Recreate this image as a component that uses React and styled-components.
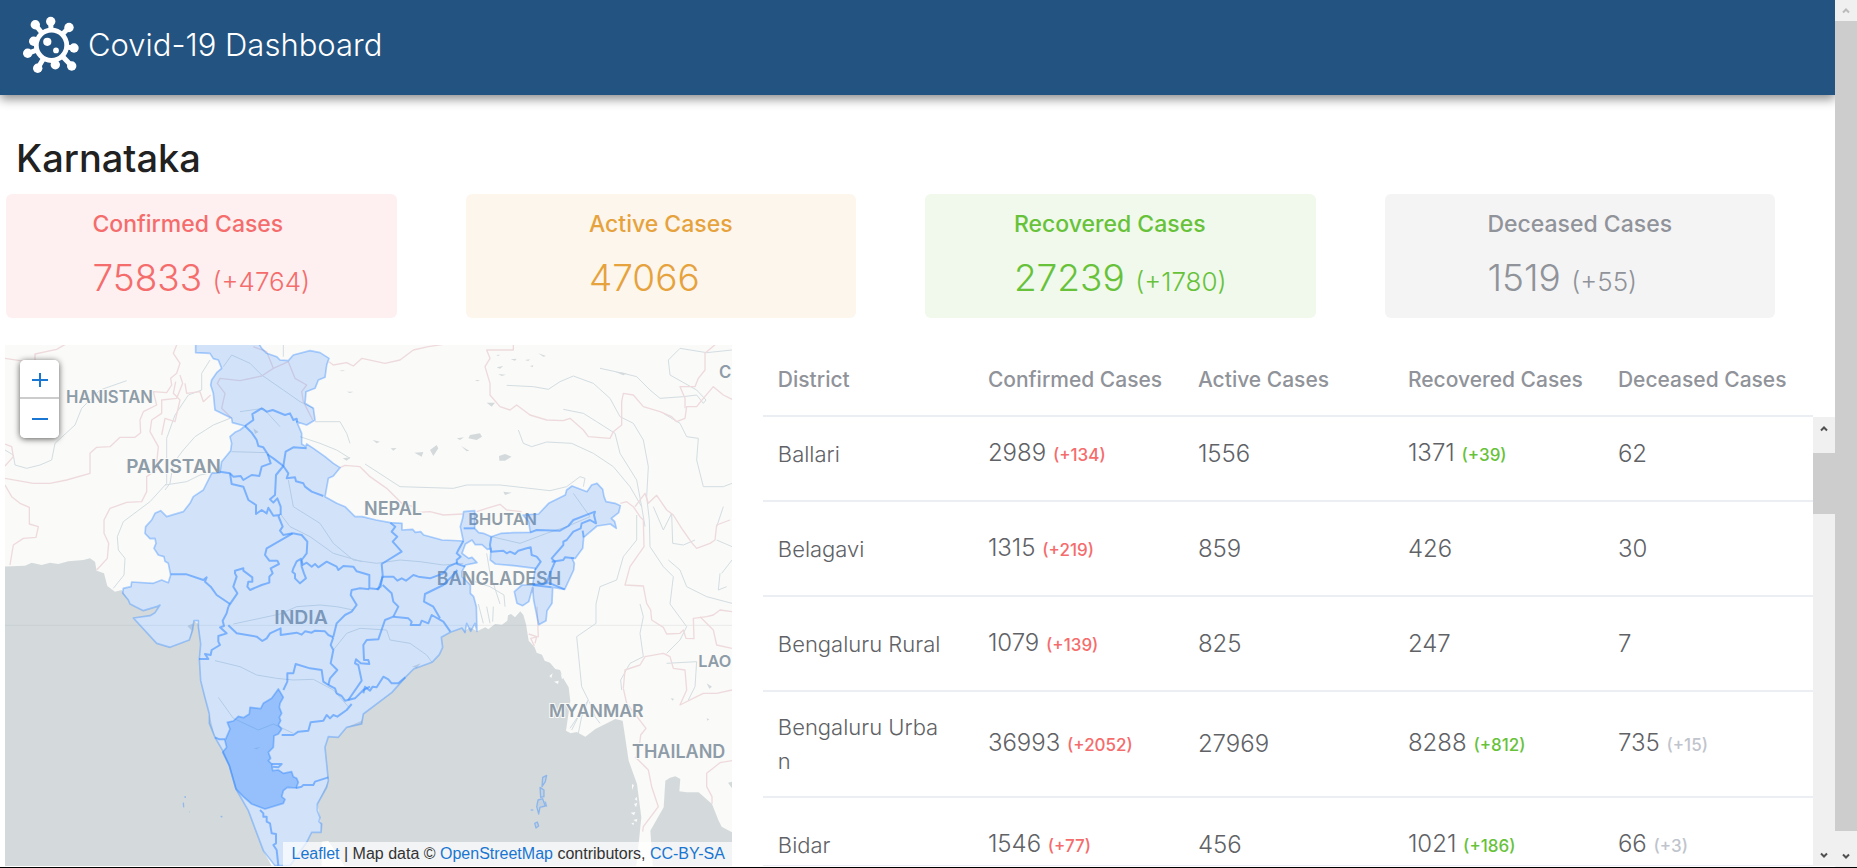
import React, { useLayoutEffect, useRef } from "react";
import styled, { createGlobalStyle } from "styled-components";

const tones = {
  red: { text: "#f56c6c", fill: "#fef0f0" },
  orange: { text: "#e6a23c", fill: "#fdf6ec" },
  green: { text: "#67c23a", fill: "#f0f9eb" },
  gray: { text: "#909399", fill: "#f4f4f5" },
  silver: { text: "#c0c4cc", fill: "#ffffff" },
};

const GlobalStyle = createGlobalStyle`
  * { box-sizing: border-box; }
  body {
    margin: 0;
    background: #fff;
    font-family: Inter, "Liberation Sans", sans-serif;
    overflow: hidden;
  }
`;

const Page = styled.div`
  display: flex;
  height: 100vh;
  border-bottom: 1px solid #000;
`;

const Content = styled.div`
  flex: 1;
  min-width: 0;
  display: flex;
  flex-direction: column;
  overflow: hidden;
`;

const Header = styled.header`
  display: flex;
  align-items: center;
  gap: 6px;
  height: 95px;
  flex: none;
  padding: 0 22px 6px;
  background: #235380;
  color: #fff;
  box-shadow: 0 4px 10px rgba(0, 0, 0, 0.45);
`;

const Brand = styled.span`
  font-size: 31px;
  line-height: 36px;
  font-weight: 300;
`;

const Title = styled.h1`
  margin: 0;
  padding: 40px 16px 13px;
  font-size: 38px;
  line-height: 46px;
  font-weight: 500;
  color: #212121;
`;

const Cards = styled.section`
  display: grid;
  grid-template-columns: repeat(4, 1fr);
  gap: 69px;
  padding: 0 60px 27px 6px;
`;

const Card = styled.article`
  display: flex;
  justify-content: center;
  height: 124px;
  padding-top: 16px;
  border-radius: 6px;
  background: ${(p) => tones[p.$tone].fill};
  color: ${(p) => tones[p.$tone].text};
`;

const CardLabel = styled.h2`
  margin: 0 0 18px;
  font-size: 23px;
  line-height: 28px;
  font-weight: 500;
`;

const CardValue = styled.div`
  font-size: 37px;
  line-height: 44px;
  font-weight: 300;
`;

const CardChange = styled.span`
  font-size: 26px;
`;

const Main = styled.main`
  flex: 1;
  min-height: 0;
  display: grid;
  grid-template-columns: minmax(0, 40fr) minmax(0, 59fr);
  grid-template-rows: minmax(0, 1fr);
  gap: 31px;
  padding: 0 0 1px 5px;
`;

const MapPane = styled.section`
  position: relative;
  overflow: hidden;
  background: #fafaf8;
`;

const MapDrawing = styled.svg`
  display: block;
  width: 100%;
  height: 100%;
`;

const Country = styled.text`
  font-size: ${(p) => p.$size}px;
  font-weight: 600;
  fill: #8e9ca8;
  text-anchor: ${(p) => p.$anchor || "middle"};
  paint-order: stroke;
  stroke: ${(p) => (p.$over ? "none" : "#fafaf8")};
  stroke-width: 6px;
`;

const ZoomControl = styled.div`
  position: absolute;
  top: 15px;
  left: 15px;
  display: flex;
  flex-direction: column;
  width: 39px;
  border-radius: 5px;
  overflow: hidden;
  box-shadow: 0 1px 6px rgba(0, 0, 0, 0.65);
`;

const ZoomButton = styled.button`
  display: flex;
  align-items: center;
  justify-content: center;
  height: 39px;
  padding: 0;
  border: 0;
  background: #fff;
  color: #1976d2;
  &:first-child {
    border-bottom: 2px solid #ccc;
  }
`;

const Attribution = styled.div`
  position: absolute;
  right: 0;
  bottom: 0;
  padding: 0 7px 0 8px;
  background: rgba(255, 255, 255, 0.7);
  font: 16px/24px "Liberation Sans", Arial, sans-serif;
  color: #333;
  white-space: nowrap;
`;

const MapLink = styled.a`
  color: #1976d2;
  text-decoration: none;
`;

const TablePane = styled.section`
  display: grid;
  grid-template-columns: minmax(0, 1fr) 22px;
  grid-template-rows: minmax(0, 1fr);
`;

const TableScroll = styled.div`
  overflow-y: auto;
  scrollbar-width: none;
  border-bottom: 1px solid #ebeef5;
`;

const Table = styled.table`
  width: 100%;
  table-layout: fixed;
  border-collapse: separate;
  border-spacing: 0;
`;

const HeadCell = styled.th`
  position: sticky;
  top: 0;
  height: 72px;
  padding: 0 0 0 15px;
  border-bottom: 2px solid #ebeef2;
  background: #fff;
  color: #909399;
  font-size: 21px;
  line-height: 34px;
  font-weight: 500;
  text-align: left;
  white-space: nowrap;
`;

const Cell = styled.td`
  height: 95px;
  padding: 18px 15px;
  border-bottom: 2px solid #ebeef2;
  color: #606266;
  font-size: 24px;
  line-height: 34px;
  font-weight: 300;
  white-space: nowrap;
`;

const District = styled.div`
  font-size: 22px;
  white-space: pre-line;
`;

const Change = styled.span`
  font-size: 17px;
  font-weight: 500;
  color: ${(p) => tones[p.$tone].text};
`;

const Rail = styled.div`
  display: flex;
  flex-direction: column;
  width: 22px;
  flex: none;
  background: #f0f0f0;
  margin-top: ${(p) => p.$top}px;
`;

const RailEnd = styled.div`
  display: flex;
  align-items: center;
  justify-content: center;
  flex: none;
  height: ${(p) => p.$height}px;
  color: ${(p) => (p.$dim ? "#bbb" : "#505050")};
`;

const Thumb = styled.div`
  flex: ${(p) => (p.$height ? "none" : 1)};
  height: ${(p) => p.$height}px;
  margin-top: ${(p) => p.$offset || 0}px;
  margin-bottom: ${(p) => (p.$height ? "auto" : p.$gap + "px")};
  background: #cdcdcd;
`;

const Chevron = ({ down }) => (
  <svg width="8" height="7" viewBox="0 0 8 7" fill="none" stroke="currentColor" strokeWidth="2">
    <path d={down ? "M1 1.5 4 4.5 7 1.5" : "M1 5.5 4 2.5 7 5.5"} />
  </svg>
);

const knobs = [
  [50.7, 22.5], [35.3, 25.7], [69, 28.5], [33.7, 42.3], [74, 49],
  [27.7, 54.3], [37.7, 69.3], [55.3, 65.7], [71.7, 67],
];

const VirusLogo = () => (
  <svg width="60" height="58" viewBox="22 17 60 58" fill="#fff" stroke="#fff" aria-hidden="true">
    {knobs.map(([x, y]) => {
      const d = Math.hypot(x - 51.5, y - 46);
      const k = 15 / d;
      return (
        <g key={x}>
          <path d={`M${51.5 + (x - 51.5) * k} ${46 + (y - 46) * k}L${x} ${y}`} strokeWidth="5" />
          <circle cx={x} cy={y} r="4.7" stroke="none" />
        </g>
      );
    })}
    <circle cx="51.5" cy="46.3" r="15.2" fill="#235380" strokeWidth="4.8" />
    <circle cx="47.3" cy="42.8" r="4.1" stroke="none" />
    <circle cx="56" cy="51.4" r="2.9" stroke="none" />
  </svg>
);

const seaPath =
  "M0 680L75 677 95 668 125 675 150 668 175 672 205 664 250 660 270 655 285 665 290 692 312 700 322 738 345 755 365 750 385 780 390 792 430 812 470 800 480 795 465 818 450 827 400 834 470 910 510 922 568 900 582 842 595 852 602 912 598 957 602 1022 628 1122 645 1192 668 1232 688 1277 708 1347 745 1412 790 1532 815 1577 870 1577 920 1507 935 1477 963 1477 960 1432 952 1392 985 1322 975 1222 985 1190 1015 1192 1040 1162 1085 1142 1090 1122 1176 1057 1216 1012 1241 987 1296 967 1318 944 1328 922 1324 892 1351 877 1386 864 1393 874 1410 862 1431 874 1456 862 1465 868 1485 852 1506 854 1522 842 1524 826 1533 822 1545 832 1561 814 1570 825 1578 852 1586 902 1604 922 1610 938 1626 944 1634 962 1650 968 1666 987 1680 990 1691 1017 1706 1042 1711 1082 1698 1172 1712 1180 1730 1176 1756 1190 1786 1167 1846 1137 1868 1142 1871 1162 1886 1262 1911 1332 1924 1432 1918 1492 1906 1600 0 1600Z";
const gulfPath =
  "M1996 1322L2010 1313 2026 1309 2041 1317 2038 1354 2060 1357 2096 1357 2136 1392 2156 1442 2165 1460 2196 1477 2210 1600 1960 1600 1951 1472 1991 1402Z";
const indiaPath =
  "M587 0L587 38 630 40 640 56 655 60 665 85 650 98 635 120 632 135 640 160 645 210 695 235 697 248 735 258 720 270 705 277 690 290 695 310 692 332 665 365 660 398 635 400 610 450 580 470 570 490 550 515 500 530 482 512 465 520 455 540 437 560 435 580 450 596 465 595 468 610 462 625 475 645 492 650 495 664 505 670 512 705 505 728 485 720 460 730 395 726 393 740 370 745 368 760 385 780 390 792 430 812 470 800 480 795 465 818 450 827 400 834 470 910 510 922 568 900 578 870 582 842 595 842 595 860 602 912 598 957 602 1022 614 1070 628 1122 628 1150 645 1192 668 1232 688 1277 708 1347 745 1412 790 1532 825 1577 870 1577 920 1507 935 1477 963 1477 965 1452 957 1445 960 1432 952 1412 952 1392 980 1342 985 1322 975 1222 985 1190 1015 1192 1040 1162 1085 1152 1090 1122 1176 1057 1216 1012 1241 987 1296 967 1318 944 1328 922 1324 892 1351 877 1386 864 1395 878 1400 850 1412 874 1425 850 1431 874 1429 800 1421 770 1411 760 1411 735 1386 710 1386 695 1396 675 1431 668 1416 652 1406 655 1386 640 1396 612 1416 600 1426 614 1446 614 1462 628 1473 625 1471 660 1486 672 1541 677 1606 685 1598 735 1566 735 1543 755 1551 790 1568 797 1586 785 1598 742 1601 780 1616 854 1638 842 1641 812 1656 790 1658 742 1694 748 1721 690 1723 670 1716 655 1726 655 1748 625 1751 592 1791 558 1831 552 1849 565 1844 545 1834 535 1856 518 1861 497 1845 490 1818 485 1812 470 1808 448 1791 430 1775 435 1761 455 1716 438 1700 450 1696 465 1646 490 1616 522 1569 525 1586 545 1591 577 1540 578 1504 580 1474 590 1450 580 1436 578 1424 565 1424 512 1391 515 1388 535 1381 560 1390 603 1326 600 1271 585 1262 575 1246 577 1238 568 1206 570 1206 550 1171 548 1128 540 1086 530 1065 530 1035 500 1010 490 975 470 985 415 1000 408 1020 383 1000 370 975 350 940 325 920 312 917 320 905 312 905 280 890 245 920 255 945 240 940 205 915 190 918 155 945 145 955 120 975 112 980 75 987 55 960 38 930 32 880 45 865 62 840 60 830 50 800 40 785 25 770 0Z";
const karnatakaPath =
  "M835 1047L843 1060 850 1072 840 1090 838 1102 845 1120 838 1132 842 1142 835 1155 845 1167 835 1182 822 1187 820 1222 805 1237 812 1255 805 1262 815 1272 818 1292 835 1290 850 1300 875 1295 880 1310 890 1315 895 1327 888 1344 862 1342 850 1352 845 1370 855 1378 850 1390 795 1407 755 1392 730 1370 708 1347 688 1277 668 1237 680 1222 675 1202 690 1167 682 1147 700 1143 715 1129 730 1133 748 1122 750 1102 782 1106 790 1090 815 1075Z";

const stateBorders = [
  "M735 258L760 240 757 222 785 205 800 215 818 210 855 225 870 220 880 240 890 236 892 248",
  "M735 258L755 278 770 300 775 318 790 322 805 345 820 355 850 378",
  "M850 378L857 335 880 322 920 325",
  "M850 378L865 400 860 415 885 412 888 424 910 430 915 440 935 455 970 468",
  "M803 342L812 370 785 380 778 408 755 405 730 420 722 408 700 410 690 400 660 395",
  "M690 400L695 432 730 440 745 480 768 495 768 522 785 510 800 520 805 503 820 527 840 525",
  "M850 378L828 405 825 465 810 478 820 488 832 475 842 500 842 525",
  "M835 528L848 560 840 572 850 585 878 580",
  "M878 580L905 585 922 605 920 640 905 660 908 675 920 668 935 680 945 672 955 682 980 665 1010 680 1015 690 1030 678 1060 680 1070 694 1108 705 1108 745 1135 748 1148 710",
  "M905 655L890 664 880 685 877 695 885 702 885 715 900 730 918 715 912 700 905 680 903 660",
  "M878 580L800 625 795 645 808 662 832 662 837 672 812 685 818 700 808 710 808 728 785 735 750 750 742 740 745 725 757 725 757 712 730 692 730 685 705 692 705 700 710 710 700 740 712 760 695 785 685 800",
  "M512 703L560 703 610 720 620 712 615 725 632 740 650 765 690 792",
  "M685 800L680 820 668 842 672 858 660 862 680 880 655 888 655 905 660 915 635 930 632 945 615 942 625 957 597 957",
  "M685 856L710 880 770 890 787 903 800 895 810 880 842 865 842 885 890 878 905 884 915 874 935 878 945 872 975 874 985 885 1000 892",
  "M1000 892L992 915 1000 930 992 970 1012 990 990 1015 985 1035",
  "M1000 890L1010 850 1035 825 1055 815 1070 795 1052 765 1055 750 1080 745 1108 748",
  "M850 1050L862 1025 862 1000 880 1000 887 972 930 985 965 990 970 1025 985 1035",
  "M985 1035L1005 1045 1010 1060 1025 1068 1035 1082 1065 1075 1090 1050 1110 1040",
  "M1045 1080L1085 1022 1075 975 1065 970 1068 958 1082 970 1108 972 1105 960 1092 960 1090 915 1100 900 1135 898 1155 840 1180 830",
  "M1090 1060L1095 1040 1110 1052 1118 1040 1130 1042 1150 1010 1165 1018 1175 1030 1195 1030 1216 1012",
  "M845 1185L880 1185 895 1175 925 1172 932 1147 970 1142 980 1125 990 1135 1000 1125 1012 1130 1040 1110 1055 1092",
  "M888 1344L905 1340 910 1335 940 1335 945 1325 985 1312",
  "M780 1410L790 1420 790 1430 800 1430 800 1445 810 1450 815 1480 828 1482 828 1510 820 1515 830 1530 835 1577",
  "M645 1192L658 1198 675 1198",
  "M815 1272L845 1272 835 1282 818 1280",
  "M1171 548L1186 560 1175 575 1192 590 1178 605 1205 635 1145 672 1148 705 1142 740 1130 748",
  "M1148 710L1180 710 1192 722 1205 715 1218 722 1240 705 1255 710 1290 715 1330 700 1345 680 1372 668",
  "M1390 603L1375 630 1370 640 1382 650 1370 660 1372 672 1396 680",
  "M1148 735L1175 760 1180 785 1195 800 1180 830",
  "M1180 830L1225 835 1235 845 1232 855 1260 855 1265 842 1285 850 1295 825 1330 845 1351 875",
  "M1372 690L1355 710 1330 735 1275 762 1272 785 1300 800 1320 835",
  "M1591 577L1610 570 1680 572 1705 558 1720 540 1785 515 1782 525 1788 550 1770 540 1745 550 1742 565 1720 575 1700 600 1690 605 1690 615 1655 655 1665 665 1650 700 1640 730 1600 735",
  "M1474 590L1470 615 1473 635 1510 632 1520 640 1530 635 1545 642 1555 632 1580 625 1592 622 1595 645 1610 650 1622 665 1605 690",
  "M1655 665L1690 660 1695 652 1722 655",
  "M1645 728L1694 748",
  "M1598 735L1655 742",
  "M1748 572L1751 592",
  "M1391 565L1424 565",
];

const foreignBorders = [
  "M15 55L60 62 105 70 105 42 170 28 210 5",
  "M530 15L520 40 540 70 530 100 512 115 515 135 500 158 460 155 470 195 430 215 420 240 422 278 405 292 360 292 330 320 290 322 270 340 270 400 200 420 150 430 100 430 15 415",
  "M15 312L35 320 40 350 15 378",
  "M15 435L35 470 60 490 88 502 88 552 115 560 108 592 70 595 40 615 30 675",
  "M540 105L548 130 530 175 485 180 485 220 455 240 450 275 475 320 468 390 440 410 440 455 425 485 380 487 330 505 312 540 312 580 326 610 322 655 290 690",
  "M527 125L520 160 540 180 525 245 495 235 485 285",
  "M555 130L560 160 600 155 610 185 632 165",
  "M695 235L680 220 665 205 675 160 652 130 660 115 720 122 785 108 820 85 800 35 760 20",
  "M820 85L865 65 885 115 920 135 905 155 910 185 938 240",
  "M987 65L1000 75 1040 68 1060 78 1086 55 1155 70 1200 60 1240 30 1285 20 1350 10",
  "M1020 383L1035 376 1080 380 1110 410 1160 445 1205 490 1240 500 1246 518 1290 515 1330 525 1388 522",
  "M1430 515L1460 505 1500 493 1520 510 1565 515",
  "M1540 10L1540 30 1460 30 1470 55 1455 80 1470 130 1470 165 1500 200 1530 210 1550 195 1590 225 1640 240 1690 242 1710 235 1750 270 1765 290 1830 295 1840 275 1865 255 1865 185 1870 160 1900 165 1930 200 1980 215 2015 230 2030 245 2055 235 2060 200 2090 200 2110 175 2140 140 2170 165 2196 178",
  "M2055 205L2055 175 2040 140 2085 140 2095 115 2115 90 2115 40 2150 10",
  "M1861 490L1880 485 1900 500 1920 530 1930 540 1932 620 1890 680 1875 735 1930 738 1940 790 1952 810 1955 840 1990 862 2000 882 2040 880 2050 870 2058 895 2082 896 2080 835 2120 830 2140 825 2160 810 2196 815",
  "M1905 500L1935 460 1945 490 1970 466 2000 510 2020 525 2045 565 2075 608 2090 625 2130 610 2145 600 2150 555 2190 540",
  "M1586 882L1610 890 1605 910",
  "M1611 800L1615 890 1592 895 1603 918",
  "M2100 830L2140 870 2150 915 2196 925",
  "M1870 1045L1875 990 1920 975 1935 950 1990 940 2010 950 2020 985 2055 990 2060 1050 2040 1095 2090 1070 2110 1060 2150 1060 2196 1050",
  "M1870 1045L1880 1090 1915 1135 1938 1165 1922 1185 1918 1220",
  "M1905 1250L1945 1290 1955 1340 1975 1400 1930 1460 1928 1475",
  "M2196 1262L2160 1268 2120 1300 2120 1340 2136 1370 2136 1392",
  "M1600 742L1596 760",
];

const rivers = [
  "M15 330L40 345 45 375 80 385 120 375 155 360 165 310 225 255 245 205 300 150 380 122",
  "M630 60L605 100 605 150 565 165 525 225 500 295 500 430 450 485 370 545 352 590 355 630 375 655 372 705 340 745",
  "M690 235L640 255 585 290 550 330 520 370 510 430 495 450",
  "M495 435L560 425 600 405 650 395",
  "M695 335L800 338",
  "M670 80L695 45 750 70 785 105 850 150 900 185 940 205",
  "M720 215L790 205 840 260 M900 290L960 310 1010 330 1050 355",
  "M945 245L1020 245 1040 280 1050 310",
  "M865 420L880 500 960 550 1000 610 1060 660 1130 670 1200 660 1260 665 1330 675 1390 670",
  "M840 520L870 560 930 590 1000 640 1086 665",
  "M645 962L720 980 770 1005 830 1015 880 1020 940 1018 1000 1050 1045 1100",
  "M655 1072L700 1135 775 1170 820 1152 880 1180",
  "M700 852L780 835 840 822 890 800 960 795 1010 800 1060 810",
  "M1000 930L1040 880 1080 865 1160 870 1170 900 1230 910 1280 945 1296 967",
  "M850 15L850 50 M1095 372L1200 440 1360 445 1400 435 1500 435 1650 452 1700 440 1740 410 1755 415 1750 440",
  "M1475 590L1560 610 1640 580 1700 560 1770 530 1720 460",
  "M1520 136L1600 140 1645 148 1680 125 1720 108 1780 130 1830 175 1860 230 1900 250 1930 300 1945 380 1940 470 1948 540 1950 620 1990 680 2020 710 2010 792 2060 860 2040 900 2000 940",
  "M1555 270L1570 310 1595 320 1640 306 1715 310 1780 340 1840 380 1890 440 1925 500 1935 560",
  "M1690 208L1750 220 1790 245 1845 280 1860 340 1910 420 1925 500",
  "M1800 85L1870 100 1910 110 1950 150 1980 175 2050 170 2090 165 2110 190 2118 180 2090 150 2010 105 2005 60 2040 25 2120 38 2196 30",
  "M1990 220L2040 250 2060 290 2095 295 2090 360 2110 440 2170 440 2196 430",
  "M1910 525L1910 600 1870 650 1850 720 1800 740 1788 792 1788 850 1730 890 1745 1040 1765 1080 1740 1120 1710 1165",
  "M2005 660L2040 690 2060 740 2120 770 2196 790",
  "M2170 500L2150 560 M1960 500L1990 570 2015 520 2018 610 2050 615 2085 600",
  "M1920 792L1930 830 1920 880 1930 950 1890 970 1862 1020 1865 1050",
  "M1460 640L1470 700 1480 730 1500 792 M1425 725L1470 740 1512 765 1515 800",
  "M1435 792L1450 850 M1460 800L1470 850 M1480 800L1478 845",
  "M1765 1080L1745 1130 1735 1180 M1768 1085L1785 1130 1800 1150 M1750 1100L1715 1170",
  "M2150 600L2196 620 M2160 700L2155 750 2180 740 M2196 660L2165 700",
  "M2000 970L2090 965 2085 1040 2065 1080",
];

const lakes =
  "M1410 285L1440 280 1446 290 1430 300 1405 295ZM1497 348L1515 342 1535 350 1515 362 1498 362ZM1300 348L1290 330 1310 315 1315 325ZM1243 338L1270 336 1265 350ZM1118 300L1140 305 1130 310ZM1172 325L1190 324 1180 332ZM1370 295L1392 292 1380 300ZM1383 318L1408 332 1400 334ZM1460 188L1485 188 1475 200ZM1488 45L1500 44 1495 48ZM1532 58L1550 56 1545 62ZM1490 82L1510 78 1500 86ZM1495 102L1518 104 1505 108ZM1575 60L1590 58 1585 63ZM1590 78L1600 76 1598 82ZM1615 40L1638 48 1630 50ZM1845 95L1880 100 1870 106ZM1425 120L1440 120 1432 124ZM1510 455L1535 458 1515 465ZM1040 155L1060 155 1050 159ZM1018 92L1035 90 1028 94ZM1028 355L1052 352 1040 362ZM760 1226L782 1220 770 1228ZM1236 980L1262 970 1250 984ZM2120 1030L2136 1040 2128 1046ZM2120 1135L2128 1138 2122 1142ZM2012 1075L2022 1076 2018 1082ZM2184 1328L2196 1325 2196 1345ZM760 265L776 276 765 282ZM562 858L580 850 578 875Z";

const andaman = [
  "M1628 1312L1640 1306 1636 1325 1626 1340Z",
  "M1620 1342L1632 1350 1632 1370 1622 1372Z",
  "M1614 1380L1628 1376 1636 1398 1620 1402 1616 1422 1610 1400Z",
  "M1604 1450L1612 1446 1616 1458 1608 1464Z",
  "M1592 1410L1600 1410",
  "M1636 1385L1640 1400",
  "M555 1368L556 1374 M550 1388L551 1402 M568 1415L569 1416 M662 1428L667 1432",
];

const islets =
  "M1662 1025L1676 1022 1674 1032ZM1648 1008L1658 1000 1654 1014ZM1682 1000L1692 1012 1686 1018ZM1896 1332L1902 1336 1896 1350ZM1902 1392L1912 1388 1908 1402ZM1892 1418L1906 1416 1902 1426ZM1900 1440L1912 1436 1910 1446ZM1904 1378L1910 1370 1912 1382ZM1894 1450L1902 1448 1900 1456Z";

const countries = [
  { name: "HANISTAN", x: 459, y: 188, size: 50, anchor: "end" },
  { name: "PAKISTAN", x: 521, y: 398, size: 57 },
  { name: "NEPAL", x: 1179, y: 524, size: 54 },
  { name: "BHUTAN", x: 1508, y: 556, size: 49, over: true },
  { name: "BANGLADESH", x: 1497, y: 734, size: 54, over: true },
  { name: "INDIA", x: 903, y: 851, size: 58, over: true },
  { name: "MYANMAR", x: 1789, y: 1132, size: 53 },
  { name: "THAILAND", x: 2036, y: 1253, size: 54 },
  { name: "LAO", x: 2194, y: 981, size: 49, anchor: "end" },
  { name: "C", x: 2194, y: 113, size: 50, anchor: "end" },
];

const IndiaMap = () => (
  <MapDrawing viewBox="15 15 2181 1563" preserveAspectRatio="xMinYMin slice" role="img" aria-label="Map of India by state">
    <g fill="#d4dadc">
      <path d={seaPath} />
      <path d={gulfPath} />
      <path d={lakes} />
    </g>
    <g fill="#fafaf8">
      <path d="M965 1505L985 1503 1010 1540 1035 1580 965 1580Z" />
      <path d={islets} />
    </g>
    <path d="M15 856H2196" stroke="#90a0a8" strokeOpacity="0.15" strokeWidth="3" />
    <g fill="none" strokeLinejoin="round">
      {rivers.map((d) => (
        <path key={d} d={d} stroke="#d3dde2" strokeWidth="3" />
      ))}
      {foreignBorders.map((d) => (
        <path key={d} d={d} stroke="#eedadd" strokeWidth="4" />
      ))}
    </g>
    {countries.map((c) => (
      <Country key={c.name} x={c.x} y={c.y} $size={c.size} $over={c.over} $anchor={c.anchor}>
        {c.name}
      </Country>
    ))}
    <g stroke="#3388ff" strokeWidth="5" strokeLinejoin="round" fill="#3388ff">
      <path d={indiaPath} fillOpacity="0.2" strokeOpacity="0.38" />
      {stateBorders.map((d) => (
        <path key={d} d={d} fill="none" strokeOpacity="0.55" strokeWidth="6" />
      ))}
      <path d={karnatakaPath} fillOpacity="0.38" strokeOpacity="0.45" />
      {andaman.map((d) => (
        <path key={d} d={d} fillOpacity="0.1" strokeOpacity="0.4" strokeWidth="4" />
      ))}
    </g>
  </MapDrawing>
);

const summary = [
  { label: "Confirmed Cases", value: "75833", change: "(+4764)", tone: "red" },
  { label: "Active Cases", value: "47066", tone: "orange" },
  { label: "Recovered Cases", value: "27239", change: "(+1780)", tone: "green" },
  { label: "Deceased Cases", value: "1519", change: "(+55)", tone: "gray" },
];

const columns = ["District", "Confirmed Cases", "Active Cases", "Recovered Cases", "Deceased Cases"];

const districts = [
  { name: "Ballari", confirmed: ["2989", "(+134)"], active: ["1556"], recovered: ["1371", "(+39)"], deceased: ["62"] },
  { name: "Belagavi", confirmed: ["1315", "(+219)"], active: ["859"], recovered: ["426"], deceased: ["30"] },
  { name: "Bengaluru Rural", confirmed: ["1079", "(+139)"], active: ["825"], recovered: ["247"], deceased: ["7"] },
  { name: "Bengaluru Urba\nn", confirmed: ["36993", "(+2052)"], active: ["27969"], recovered: ["8288", "(+812)"], deceased: ["735", "(+15)"] },
  { name: "Bidar", confirmed: ["1546", "(+77)"], active: ["456"], recovered: ["1021", "(+186)"], deceased: ["66", "(+3)"] },
];

const Count = ({ data, tone }) => (
  <Cell>
    {data[0]} {data[1] && <Change $tone={tone}>{data[1]}</Change>}
  </Cell>
);

export default function App() {
  const scroller = useRef(null);
  useLayoutEffect(() => {
    scroller.current.scrollTop = 10;
  }, []);

  return (
    <>
      <GlobalStyle />
      <Page>
        <Content>
          <Header>
            <VirusLogo />
            <Brand>Covid-19 Dashboard</Brand>
          </Header>
          <Title>Karnataka</Title>
          <Cards>
            {summary.map((s) => (
              <Card key={s.label} $tone={s.tone}>
                <div>
                  <CardLabel>{s.label}</CardLabel>
                  <CardValue>
                    {s.value} {s.change && <CardChange>{s.change}</CardChange>}
                  </CardValue>
                </div>
              </Card>
            ))}
          </Cards>
          <Main>
            <MapPane>
              <IndiaMap />
              <ZoomControl>
                <ZoomButton aria-label="Zoom in">
                  <svg width="16" height="16" viewBox="0 0 16 16" stroke="currentColor" strokeWidth="2">
                    <path d="M0 9H16M8 2V16" />
                  </svg>
                </ZoomButton>
                <ZoomButton aria-label="Zoom out">
                  <svg width="16" height="16" viewBox="0 0 16 16" stroke="currentColor" strokeWidth="2">
                    <path d="M0 8H16" />
                  </svg>
                </ZoomButton>
              </ZoomControl>
              <Attribution>
                <MapLink href="https://leafletjs.com">Leaflet</MapLink> | Map data ©{" "}
                <MapLink href="https://www.openstreetmap.org">OpenStreetMap</MapLink> contributors,{" "}
                <MapLink href="https://creativecommons.org/licenses/by-sa/2.0/">CC-BY-SA</MapLink>
              </Attribution>
            </MapPane>
            <TablePane>
              <TableScroll ref={scroller}>
                <Table>
                  <thead>
                    <tr>
                      {columns.map((c) => (
                        <HeadCell key={c} scope="col">{c}</HeadCell>
                      ))}
                    </tr>
                  </thead>
                  <tbody>
                    {districts.map((d) => (
                      <tr key={d.name}>
                        <Cell><District>{d.name}</District></Cell>
                        <Count data={d.confirmed} tone="red" />
                        <Count data={d.active} tone="orange" />
                        <Count data={d.recovered} tone="green" />
                        <Count data={d.deceased} tone="silver" />
                      </tr>
                    ))}
                  </tbody>
                </Table>
              </TableScroll>
              <Rail $top={72} aria-hidden="true">
                <RailEnd $height={22}><Chevron /></RailEnd>
                <Thumb $height={61} $offset={14} />
                <RailEnd $height={22}><Chevron down /></RailEnd>
              </Rail>
            </TablePane>
          </Main>
        </Content>
        <Rail $top={0} aria-hidden="true">
          <RailEnd $height={21} $dim><Chevron /></RailEnd>
          <Thumb $gap={15} />
          <RailEnd $height={21}><Chevron down /></RailEnd>
        </Rail>
      </Page>
    </>
  );
}
